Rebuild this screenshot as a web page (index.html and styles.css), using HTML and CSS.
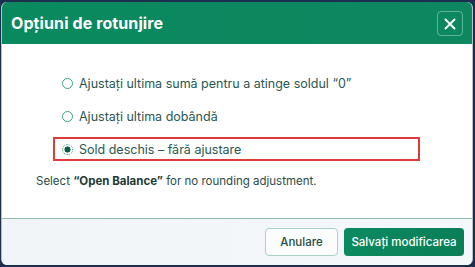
FILE: index.html
```html
<!DOCTYPE html>
<html lang="ro">
<head>
<meta charset="utf-8">
<link rel="stylesheet" href="styles.css">
</head>
<body>
<div class="dialog">
  <div class="header">
    <h1 class="title">Opțiuni de rotunjire</h1>
    <button class="close" aria-label="Închide">
      <svg width="12" height="12" viewBox="0 0 12 12"><path d="M1.5 1.5 L10.5 10.5 M10.5 1.5 L1.5 10.5" stroke="#fff" stroke-width="1.8" stroke-linecap="round"/></svg>
    </button>
  </div>
  <div class="body">
    <div class="options">
      <label class="option"><span class="radio"></span><span>Ajustați ultima sumă pentru a atinge soldul “0”</span></label>
      <label class="option"><span class="radio"></span><span>Ajustați ultima dobândă</span></label>
      <label class="option selected"><span class="radio checked"></span><span>Sold deschis – fără ajustare</span></label>
    </div>
    <p class="hint">Select <b>“Open Balance”</b> for no rounding adjustment.</p>
  </div>
  <div class="footer">
    <button class="btn cancel">Anulare</button>
    <button class="btn save">Salvați modificarea</button>
  </div>
</div>
</body>
</html>
```

FILE: styles.css
```css
* { box-sizing: border-box; }
html, body { margin: 0; height: 100%; }
body {
  background: #1d2f4f;
  font-family: Inter, "Noto Sans", sans-serif;
  padding: 2px 2px 2px 1px;
}
.dialog {
  height: 100%;
  background: #fff;
  border-radius: 6px;
  overflow: hidden;
  display: flex;
  flex-direction: column;
  border-left: 1px solid #b9c0c6;
  border-right: 1px solid #b9c0c6;
}
.header {
  height: 42px;
  background: linear-gradient(90deg, #0a895e, #0d8760);
  display: flex;
  align-items: center;
  justify-content: space-between;
  padding: 0 9px 0 9px;
}
.title {
  margin: 0;
  color: #fff;
  font-size: 16px;
  font-weight: 700;
  letter-spacing: 0.1px;
}
.close {
  width: 26px;
  height: 25px;
  border: 1px solid rgba(255,255,255,0.35);
  border-radius: 4px;
  background: transparent;
  display: flex;
  align-items: center;
  justify-content: center;
  padding: 0;
  margin-top: 1px;
}
.body {
  flex: 1;
  padding: 27px 0 0 34px;
}
.options {
  display: flex;
  flex-direction: column;
  gap: 9px;
  padding-left: 17px;
}
.option {
  display: flex;
  align-items: center;
  gap: 6px;
  height: 24px;
  width: 367px;
  padding-left: 9px;
  font-size: 12.5px;
  color: #2a5752;
}
.option.selected {
  border: 2px solid #e03a3a;
  padding-left: 7px;
}
.radio {
  width: 11px;
  height: 11px;
  border: 1.3px solid #3aa283;
  border-radius: 50%;
  flex: none;
}
.radio.checked {
  border: 1.3px dotted #3aa283;
  background: radial-gradient(circle, #0b5a45 0 2.8px, #fff 3.3px);
}
.hint {
  margin: 13px 0 0;
  font-size: 11.5px;
  color: #2b4a47;
}
.hint b { font-weight: 700; color: #1d3a37; }
.footer {
  height: 47px;
  border-top: 1px solid #8db7a8;
  background: linear-gradient(90deg, #f1f5f8, #f5f8fa);
  display: flex;
  justify-content: flex-end;
  align-items: center;
  gap: 6px;
  padding: 0 8px 0 0;
}
.btn {
  height: 28px;
  border-radius: 4px;
  font-family: inherit;
  font-size: 11.5px;
  font-weight: 500;
}
.cancel {
  width: 73px;
  background: #fbfdfd;
  border: 1px solid #a9d2c7;
  color: #1f4a46;
}
.save {
  width: 120px;
  background: linear-gradient(90deg, #0b8a5f, #0a7e57);
  border: none;
  color: #fff;
  font-weight: 500;
}
```
